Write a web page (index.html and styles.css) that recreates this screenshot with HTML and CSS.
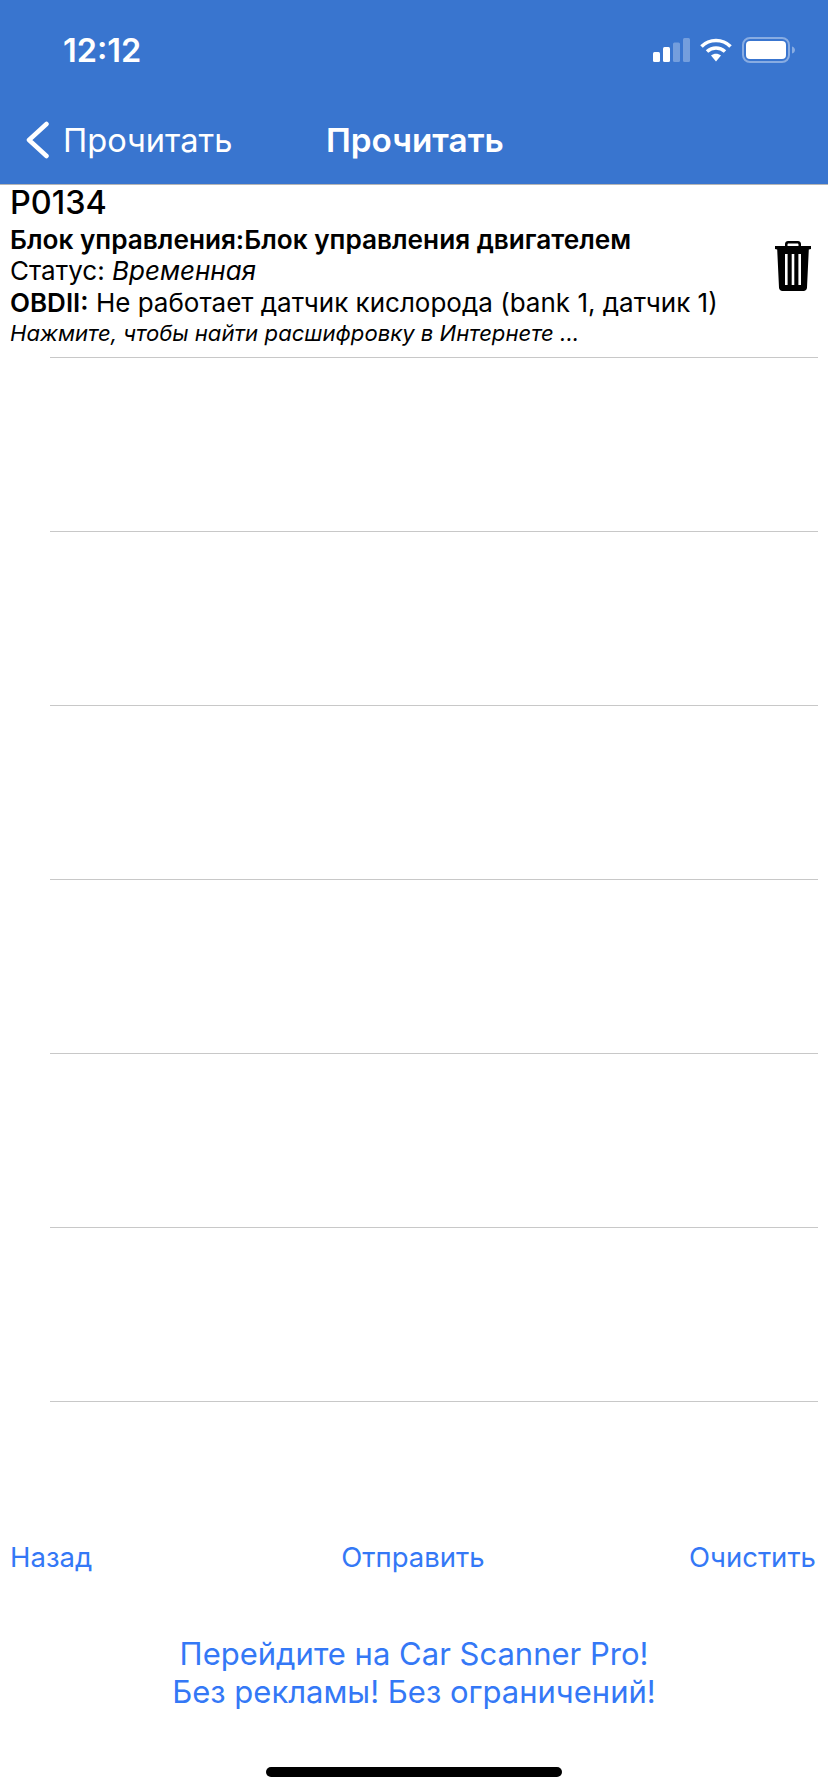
FILE: index.html
```html
<!DOCTYPE html>
<html lang="ru">
<head>
  <meta charset="UTF-8" />
  <meta name="viewport" content="width=device-width, initial-scale=1.0">
  <title>Прочитать</title>
  <link rel="stylesheet" href="styles.css">
</head>
<body>
  <header class="header">
    <div class="status-bar">
      <span class="clock">12:12</span>
      <div class="status-icons">
        <svg class="signal" width="37" height="24" viewBox="0 0 37 24">
          <rect x="0" y="14" width="7" height="10" rx="1.5" fill="#fff"/>
          <rect x="10" y="9" width="7" height="15" rx="1.5" fill="#fff"/>
          <rect x="20" y="4.500" width="7" height="19.500" rx="1.500" fill="#fff" opacity=".3"/>
          <rect x="30" y="0" width="7" height="24" rx="1.500" fill="#fff" opacity=".3"/>
        </svg>
        <svg class="wifi" width="32" height="24" viewBox="0 0 32 24">
          <path d="M1.500 8.500C9.500 0.500 22.500 0.500 30.500 8.500" fill="none" stroke="#fff" stroke-width="3.600"/>
          <path d="M7 13.500C12.300 8.800 19.700 8.800 25 13.500" fill="none" stroke="#fff" stroke-width="3.600"/>
          <path d="M11 17.500C14 15 18 15 21 17.500L16 23.500Z" fill="#fff"/>
        </svg>
        <svg class="battery" width="54" height="26" viewBox="0 0 54 26">
          <rect x="1" y="1" width="46" height="24" rx="7" fill="none" stroke="#fff" stroke-opacity=".4" stroke-width="2"/>
          <rect x="4" y="4" width="40" height="18" rx="4" fill="#fff"/>
          <path d="M50 9.500C52 10 53 11.500 53 13C53 14.500 52 16 50 16.500Z" fill="#fff" opacity=".4"/>
        </svg>
      </div>
    </div>
    <nav class="nav-bar">
      <a class="back-link">
        <svg width="26" height="38" viewBox="0 0 26 38">
          <path d="M22.500 3L5 19L22.500 35" fill="none" stroke="#fff" stroke-width="4.500" stroke-linecap="round" stroke-linejoin="round"/>
        </svg>
        <span>Прочитать</span>
      </a>
      <h1 class="nav-title">Прочитать</h1>
    </nav>
  </header>

  <main class="code-list">
    <div class="code-row first">
      <div class="code-info">
        <div class="code-name">P0134</div>
        <div class="code-unit">Блок управления:Блок управления двигателем</div>
        <div class="code-line">Статус: <em>Временная</em></div>
        <div class="code-line"><strong>OBDII:</strong> Не работает датчик кислорода (bank 1, датчик 1)</div>
        <div class="code-hint">Нажмите, чтобы найти расшифровку в Интернете ...</div>
      </div>
      <svg class="trash" width="36" height="50" viewBox="0 0 36 50">
        <path d="M10 6V3C10 1.200 11.500 0 13 0H23C24.500 0 26 1.200 26 3V6H23.500V3.500C23.500 2.800 23 2.400 22.500 2.400H13.500C13 2.400 12.500 2.800 12.500 3.500V6Z" fill="#000"/>
        <path d="M0 5H36V8L33.800 8.500L32 46.500C31.900 48.500 30.500 50 28.500 50H7.500C5.500 50 4.100 48.500 4 46.500L2.200 8.500L0 8Z" fill="#000"/>
        <rect x="10" y="13" width="2.600" height="31" fill="#fff"/>
        <rect x="16.700" y="13" width="2.600" height="31" fill="#fff"/>
        <rect x="23.400" y="13" width="2.600" height="31" fill="#fff"/>
      </svg>
    </div>
    <div class="code-row"></div>
    <div class="code-row"></div>
    <div class="code-row"></div>
    <div class="code-row"></div>
    <div class="code-row"></div>
    <div class="code-row"></div>
  </main>

  <div class="toolbar">
    <a>Назад</a>
    <a>Отправить</a>
    <a class="toolbar-right">Очистить</a>
  </div>

  <a class="promo">Перейдите на Car Scanner Pro!<br>Без рекламы! Без ограничений!</a>

  <div class="home-bar"></div>
</body>
</html>
```

FILE: styles.css
```css
* {
  margin: 0;
  padding: 0;
  box-sizing: border-box;
}

body {
  font-family: Inter, "Noto Sans", sans-serif;
  background: white;
  color: black;
  width: 828px;
  height: 1792px;
  overflow: hidden;
}

.header {
  height: 185px;
  background: #3975cf;
  border-bottom: 1px solid #b5b5b5;
  color: white;
}

.status-bar {
  height: 100px;
  display: flex;
  align-items: center;
  justify-content: space-between;
  padding: 0 32px 0 63px;
}

.clock {
  font-size: 32.500px;
  font-weight: 600;
}

.status-icons {
  display: flex;
  align-items: center;
  gap: 10px;
}

.nav-bar {
  height: 84px;
  display: flex;
  align-items: center;
  padding-bottom: 4px;
}

.back-link {
  display: flex;
  align-items: center;
  gap: 13px;
  padding-left: 24px;
  width: 326px;
  font-size: 32.600px;
}

.nav-title {
  font-size: 33.300px;
  font-weight: 600;
}

.code-row {
  height: 174px;
  margin-left: 50px;
  margin-right: 10px;
  border-bottom: 1px solid #c8c8c8;
}

.code-row.first {
  height: 173px;
  margin-left: 0;
  margin-right: 0;
  border-bottom: none;
  display: flex;
  align-items: center;
  justify-content: space-between;
  padding: 0 17px 12px 10px;
  position: relative;
}

.code-row.first::after {
  content: '';
  position: absolute;
  left: 50px;
  right: 10px;
  bottom: 0;
  height: 1px;
  background: #c8c8c8;
}

.code-info {
  align-self: flex-start;
}

.code-name {
  font-size: 32.400px;
  font-weight: 500;
  line-height: 36px;
}

.code-unit {
  font-size: 26.200px;
  font-weight: 600;
  line-height: 30px;
  padding-top: 4px;
}

.code-line {
  font-size: 26px;
  line-height: 32px;
}

.code-line strong {
  font-weight: 600;
}

.code-hint {
  font-size: 22.100px;
  font-style: italic;
  line-height: 28px;
}

.toolbar {
  margin-top: 136px;
  padding: 0 12px 0 10px;
  display: grid;
  grid-template-columns: 1fr auto 1fr;
  font-size: 27.500px;
  line-height: 38px;
  color: #3478f6;
}

.toolbar-right {
  text-align: right;
}

.promo {
  display: block;
  margin-top: 59px;
  text-align: center;
  font-size: 31px;
  line-height: 38px;
  color: #3478f6;
}

.home-bar {
  width: 296px;
  height: 10px;
  margin: 56px auto 0;
  border-radius: 5px;
  background: black;
}
```
